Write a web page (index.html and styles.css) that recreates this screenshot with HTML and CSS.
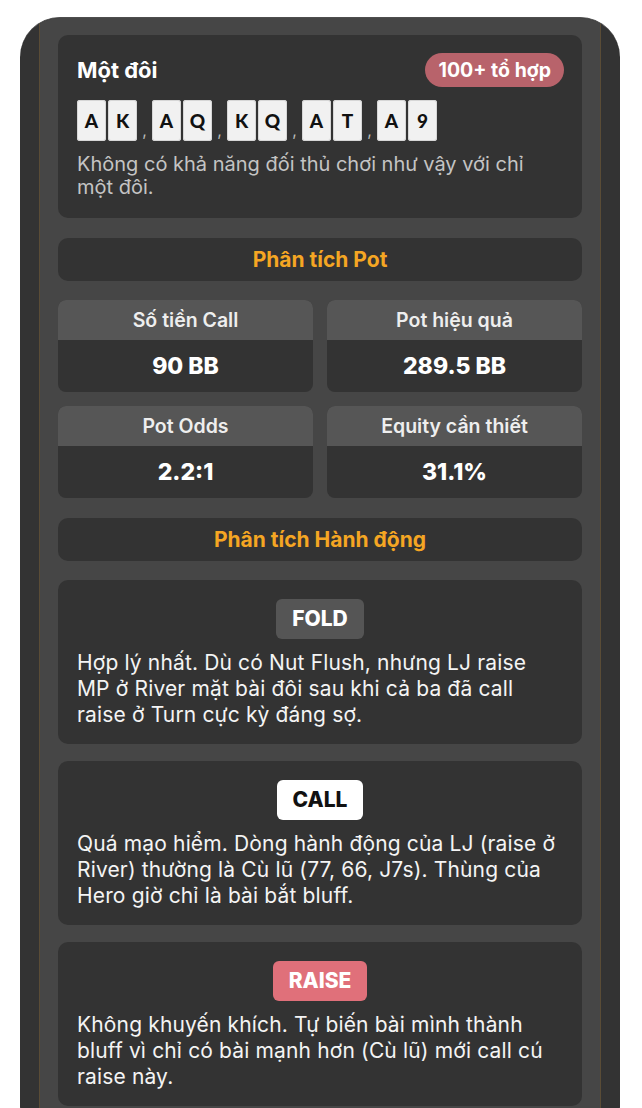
FILE: index.html
```html
<!DOCTYPE html>
<html lang="vi">
<head>
<meta charset="utf-8">
<link rel="stylesheet" href="styles.css">
</head>
<body>
<div class="frame">
  <div class="panel">
    <section class="card range">
      <div class="range-head">
        <h2 class="range-title">Một đôi</h2>
        <span class="badge">100+ tổ hợp</span>
      </div>
      <div class="hands">
        <span class="hand"><span class="chip">A</span><span class="chip">K</span></span><span class="sep">,</span>
        <span class="hand"><span class="chip">A</span><span class="chip">Q</span></span><span class="sep">,</span>
        <span class="hand"><span class="chip">K</span><span class="chip">Q</span></span><span class="sep">,</span>
        <span class="hand"><span class="chip">A</span><span class="chip">T</span></span><span class="sep">,</span>
        <span class="hand"><span class="chip">A</span><span class="chip">9</span></span>
      </div>
      <p class="range-desc">Không có khả năng đối thủ chơi như vậy với chỉ một đôi.</p>
    </section>

    <div class="card section-head">Phân tích Pot</div>

    <div class="stats">
      <div class="stat"><div class="stat-label">Số tiền Call</div><div class="stat-value">90 BB</div></div>
      <div class="stat"><div class="stat-label">Pot hiệu quả</div><div class="stat-value">289.5 BB</div></div>
      <div class="stat"><div class="stat-label">Pot Odds</div><div class="stat-value">2.2:1</div></div>
      <div class="stat"><div class="stat-label">Equity cần thiết</div><div class="stat-value">31.1%</div></div>
    </div>

    <div class="card section-head">Phân tích Hành động</div>

    <div class="actions">
      <section class="card action">
        <span class="tag tag-fold">FOLD</span>
        <p class="action-text">Hợp lý nhất. Dù có Nut Flush, nhưng LJ raise MP ở River mặt bài đôi sau khi cả ba đã call raise ở Turn cực kỳ đáng sợ.</p>
      </section>
      <section class="card action">
        <span class="tag tag-call">CALL</span>
        <p class="action-text">Quá mạo hiểm. Dòng hành động của LJ (raise ở River) thường là Cù lũ (77, 66, J7s). Thùng của Hero giờ chỉ là bài bắt bluff.</p>
      </section>
      <section class="card action">
        <span class="tag tag-raise">RAISE</span>
        <p class="action-text">Không khuyến khích. Tự biến bài mình thành bluff vì chỉ có bài mạnh hơn (Cù lũ) mới call cú raise này.</p>
      </section>
    </div>
  </div>
</div>
</body>
</html>
```

FILE: styles.css
```css
* { box-sizing: border-box; }
html, body { margin: 0; padding: 0; background: #ffffff; }
body {
  font-family: Inter, "Noto Sans", "DejaVu Sans", sans-serif;
  color: #f2f2f2;
  overflow: hidden;
}
.frame {
  width: 600px;
  height: 1130px;
  margin: 17px 0 0 20px;
  background: #333333;
  border-radius: 40px;
  border-top: 1px solid #4e4e4e;
  padding: 0 19px;
  overflow: hidden;
}
.panel {
  height: 100%;
  background: #464646;
  border-left: 1px solid #5a4c36;
  border-right: 1px solid #5a4c36;
  padding: 17px 18px 0 18px;
  display: flex;
  flex-direction: column;
  gap: 20px;
}
.card {
  background: #333333;
  border-radius: 10px;
}
.range { padding: 18px 18px 19px 19px; }
.range-head {
  display: flex;
  justify-content: space-between;
  align-items: center;
  height: 34px;
}
.range-title {
  margin: 0;
  font-size: 22px;
  font-weight: 700;
  color: #ffffff;
}
.badge {
  background: #b8636b;
  color: #ffffff;
  font-weight: 700;
  font-size: 19.5px;
  height: 34px;
  line-height: 34px;
  padding: 0 13px 0 14px;
  border-radius: 17px;
}
.hands {
  display: flex;
  align-items: flex-end;
  margin-top: 13px;
  height: 41px;
}
.hand { display: flex; gap: 2px; }
.chip {
  width: 29px;
  height: 41px;
  background: #f1f1f1;
  border-radius: 3px;
  box-shadow: inset 0 0 0 1px #d6d6d6;
  color: #111;
  font-family: Lato, "DejaVu Sans", sans-serif;
  font-weight: 900;
  font-size: 19px;
  display: flex;
  align-items: center;
  justify-content: center;
}
.sep {
  width: 15px;
  text-align: center;
  color: #bbbbbb;
  font-size: 16px;
  line-height: 1;
  padding-bottom: 3px;
}
.range-desc {
  margin: 12px 0 0;
  font-size: 20px;
  line-height: 23px;
  color: #c4c4c4;
}
.section-head {
  height: 43px;
  display: flex;
  align-items: center;
  justify-content: center;
  font-size: 21px;
  font-weight: 700;
  color: #f5a623;
}
.stats {
  display: grid;
  grid-template-columns: 1fr 1fr;
  gap: 14px;
  margin-top: -1px;
}
.stat {
  border-radius: 8px;
  overflow: hidden;
  background: #333333;
}
.stat-label {
  background: #565656;
  height: 40px;
  display: flex;
  align-items: center;
  justify-content: center;
  font-size: 19.5px;
  font-weight: 600;
  color: #eeeeee;
}
.stat-value {
  height: 52px;
  display: flex;
  align-items: center;
  justify-content: center;
  font-size: 23px;
  font-weight: 800;
  color: #ffffff;
}
.actions {
  display: flex;
  flex-direction: column;
  gap: 17px;
  margin-top: -1px;
}
.action {
  padding: 19px 19px 16px;
  display: flex;
  flex-direction: column;
  align-items: center;
}
.tag {
  height: 40px;
  line-height: 40px;
  padding: 0 16px;
  border-radius: 6px;
  font-size: 21px;
  font-weight: 800;
}
.tag-fold { background: #555555; color: #ffffff; }
.tag-call { background: #ffffff; color: #111111; }
.tag-raise { background: #e0707a; color: #ffffff; }
.action-text {
  align-self: stretch;
  margin: 11px 0 0;
  font-size: 21px;
  line-height: 26px;
  letter-spacing: 0.15px;
  color: #f4f4f4;
}
```
